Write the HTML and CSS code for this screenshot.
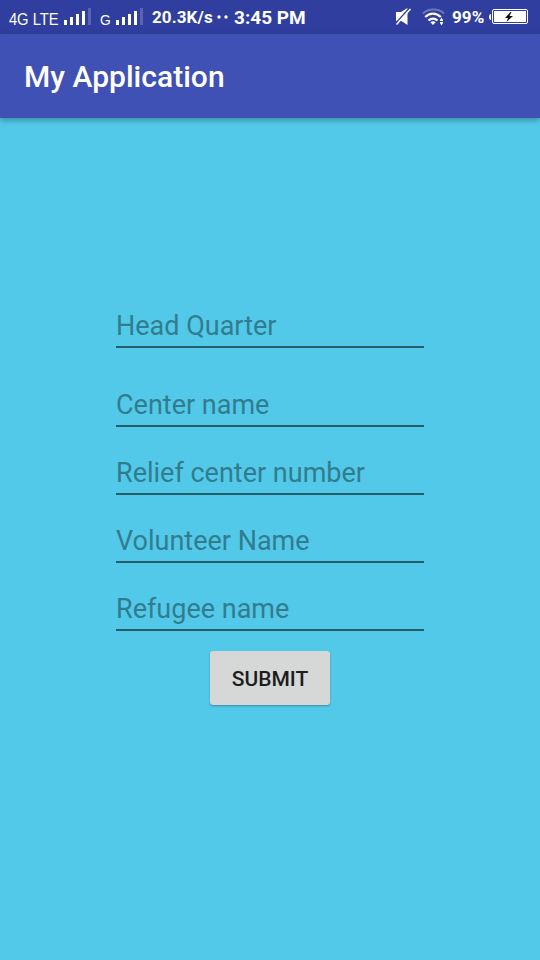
FILE: index.html
```html
<!DOCTYPE html>
<html lang="en">
<head>
<meta charset="utf-8">
<title>My Application</title>
<link rel="stylesheet" href="styles.css">
</head>
<body>
<div class="status">
  <span class="net lte">4G LTE</span>
  <svg class="bars" width="27" height="17" viewBox="0 0 27 17" fill="#fff"><path d="M0 12h3v5H0zM6 9h3v8H6zM12 6h3v11h-3zM18 3h3v14h-3z"/><path opacity=".2" d="M24 0h3v17h-3z"/></svg>
  <span class="net gsm">G</span>
  <svg class="bars" width="27" height="17" viewBox="0 0 27 17" fill="#fff"><path d="M0 12h3v5H0zM6 9h3v8H6zM12 6h3v11h-3zM18 3h3v14h-3z"/><path opacity=".2" d="M24 0h3v17h-3z"/></svg>
  <span class="speed">20.3K/s</span>
  <svg class="dots" width="11" height="4" viewBox="0 0 11 4" fill="#fff"><circle cx="2" cy="2" r="1.700"/><circle cx="9" cy="2" r="1.700"/></svg>
  <span class="clock">3:45 PM</span>
  <svg class="mute" width="17" height="18" viewBox="0 0 17 18"><path fill="#fff" d="M1 4h5l6.500-4v17L6.500 13H1z"/><path d="M0 16 14.500 0" stroke="#303f9f" stroke-width="1.500"/><path d="M1.500 16.500 15.500 1" stroke="#fff" stroke-width="1.500"/></svg>
  <svg class="wifi" width="23" height="18" viewBox="0 0 23 18" fill="none" stroke="#fff"><path opacity=".3" stroke-width="2" d="M1 5.500C6 .2 17 .2 22 5.500"/><path stroke-width="2.200" d="M3.200 9c4.500-4.600 11.100-4.600 15.600 0M6.500 12.500c2.500-2.500 6.500-2.500 9 0"/><path fill="#fff" stroke="none" d="M8.300 14.300q2.700-2 5.400 0L11 17zM18 12l1.500-2.500L21 12v1h-3zM18 14h3v1l-1.500 2.500L18 15z"/></svg>
  <span class="percent">99%</span>
  <svg class="battery" width="39" height="16" viewBox="0 0 39 16"><path fill="#fff" d="M2 5v6H1.500Q0 10.500 0 8t1.500-3z"/><rect x="3.500" y=".5" width="35" height="14" rx="1.500" fill="none" stroke="#fff"/><path fill="#fff" d="M5 2h32v11H5z"/><path fill="#111" d="m21.500 3-5.500 6h3l-1.500 4 6.500-6h-3.500l2-4z"/></svg>
</div>
<header class="toolbar"><h1>My Application</h1></header>
<main class="form">
  <input class="field first" type="text" placeholder="Head Quarter">
  <input class="field" type="text" placeholder="Center name">
  <input class="field" type="text" placeholder="Relief center number">
  <input class="field" type="text" placeholder="Volunteer Name">
  <input class="field" type="text" placeholder="Refugee name">
  <button class="submit" type="button">SUBMIT</button>
</main>
</body>
</html>
```
FILE: styles.css
```css
* { box-sizing: border-box; }
body {
  margin: 0;
  height: 960px;
  display: flex;
  flex-direction: column;
  overflow: hidden;
  background: #52c9e8;
  font-family: Roboto, "Liberation Sans", sans-serif;
}
.status {
  flex: none;
  height: 34px;
  display: flex;
  align-items: flex-start;
  padding-left: 8px;
  background: #303f9f;
  color: #fff;
  white-space: nowrap;
}
.status span, .status svg { flex: none; display: block; }
.status span { line-height: 20px; }
.net {
  padding-top: 10px;
  font-family: "Liberation Sans", sans-serif;
  font-size: 16px;
  transform: scaleX(0.92);
  transform-origin: 0 0;
}
.lte { width: 56px; padding-left: 1px; }
.gsm { width: 16px; margin-left: 9px; font-size: 15px; }
.bars { margin-top: 8px; }
.speed { width: 65px; margin-left: 9px; padding-top: 7px; font-size: 17px; font-weight: 700; letter-spacing: 0.1px; }
.dots { margin-top: 15px; }
.clock { width: 74px; margin-left: 6px; padding-top: 8px; font-size: 19px; font-weight: 700; }
.mute { margin: 8px 0 0 87px; }
.wifi { margin: 8px 0 0 10px; }
.percent { width: 37px; margin-left: 7px; padding-top: 7px; font-size: 17px; font-weight: 700; letter-spacing: 0.1px; }
.battery { margin-top: 9px; }
.toolbar {
  flex: none;
  height: 84px;
  display: flex;
  align-items: center;
  padding: 1px 24px 0;
  background: #3f51b5;
  color: #fff;
  box-shadow: 0 2px 6px rgba(0, 0, 0, .33);
}
.toolbar h1 { margin: 0; font-size: 30px; font-weight: 500; letter-spacing: 0.03px; }
.form {
  display: flex;
  flex-direction: column;
  align-items: center;
  padding-top: 186px;
}
.field {
  width: 308px;
  height: 44px;
  margin: 0 0 24px;
  padding: 1px 0 0;
  border: 0;
  border-bottom: 2px solid #265d6b;
  border-radius: 0;
  background: transparent;
  outline: 0;
  color: #222;
  font: 400 27px Roboto, "Liberation Sans", sans-serif;
}
.field::placeholder { color: #327c8f; opacity: 1; }
.first { margin-bottom: 35px; }
.submit {
  width: 120px;
  height: 54px;
  margin-top: -4px;
  padding: 1px 0 0;
  border: 0;
  border-radius: 3px;
  background: #d6d7d7;
  box-shadow: 0 1px 2px rgba(0, 0, 0, .3);
  color: #1d1d1d;
  font: 500 21px Roboto, "Liberation Sans", sans-serif;
}
```
